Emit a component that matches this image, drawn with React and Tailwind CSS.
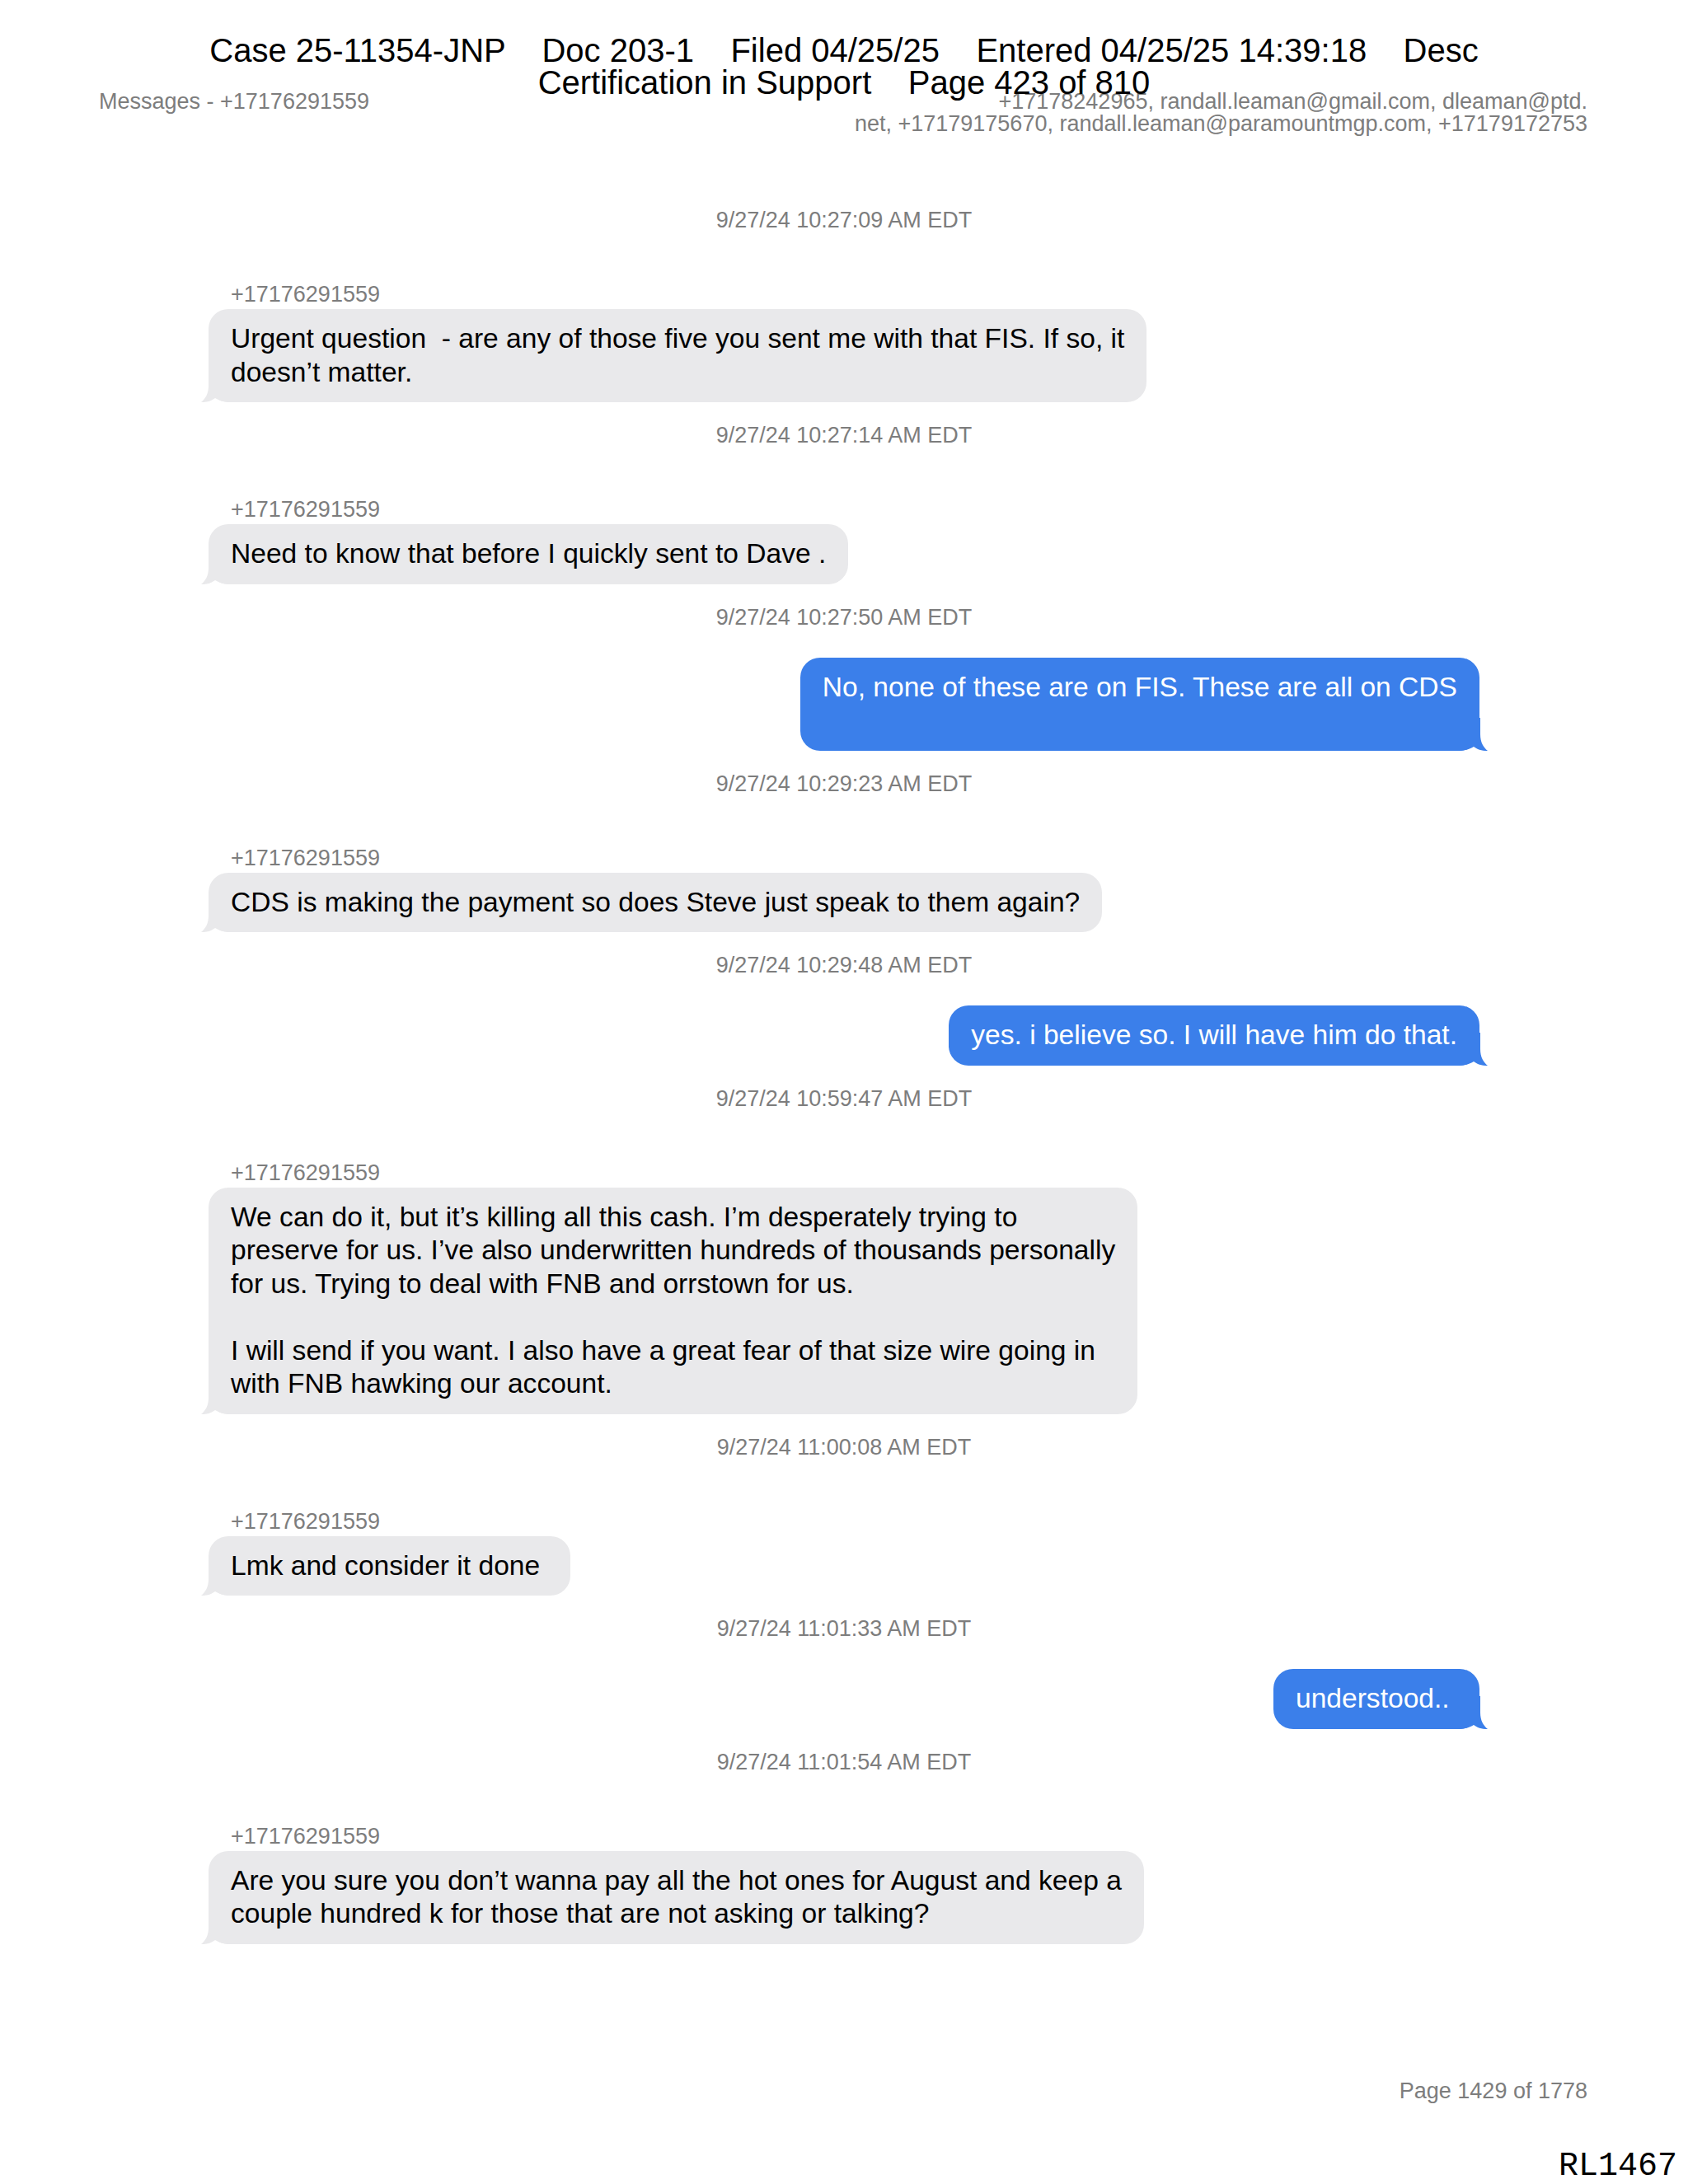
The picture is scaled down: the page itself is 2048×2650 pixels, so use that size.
const SENDER = "+17176291559";

const messages = [
  {
    time: "9/27/24 10:27:09 AM EDT",
    from: SENDER,
    lines: [
      "Urgent question  - are any of those five you sent me with that FIS. If so, it",
      "doesn’t matter.",
    ],
  },
  {
    time: "9/27/24 10:27:14 AM EDT",
    from: SENDER,
    lines: ["Need to know that before I quickly sent to Dave ."],
  },
  {
    time: "9/27/24 10:27:50 AM EDT",
    sent: true,
    lines: ["No, none of these are on FIS. These are all on CDS", " "],
  },
  {
    time: "9/27/24 10:29:23 AM EDT",
    from: SENDER,
    lines: ["CDS is making the payment so does Steve just speak to them again?"],
  },
  {
    time: "9/27/24 10:29:48 AM EDT",
    sent: true,
    lines: ["yes. i believe so. I will have him do that."],
  },
  {
    time: "9/27/24 10:59:47 AM EDT",
    from: SENDER,
    lines: [
      "We can do it, but it’s killing all this cash. I’m desperately trying to",
      "preserve for us. I’ve also underwritten hundreds of thousands personally",
      "for us. Trying to deal with FNB and orrstown for us.",
      " ",
      "I will send if you want. I also have a great fear of that size wire going in",
      "with FNB hawking our account.",
    ],
  },
  {
    time: "9/27/24 11:00:08 AM EDT",
    from: SENDER,
    lines: ["Lmk and consider it done "],
  },
  {
    time: "9/27/24 11:01:33 AM EDT",
    sent: true,
    lines: ["understood.. "],
  },
  {
    time: "9/27/24 11:01:54 AM EDT",
    from: SENDER,
    lines: [
      "Are you sure you don’t wanna pay all the hot ones for August and keep a",
      "couple hundred k for those that are not asking or talking?",
    ],
  },
];

function Tail({ sent }) {
  // little hook at the bottom corner of the bubble
  return (
    <svg
      viewBox="0 0 40 40"
      className={
        sent
          ? "absolute -right-[10px] bottom-0 w-[40px] h-[40px] -scale-x-100 fill-[#3b7fea]"
          : "absolute -left-[9px] bottom-0 w-[40px] h-[40px] fill-[#e9e9eb]"
      }
    >
      <path d="M9 0 L9 20 C9 30 5 36 0 40 C8 40 13 38 17 35 C22 38 28 40 40 40 L40 0 Z" />
    </svg>
  );
}

function Bubble({ msg }) {
  return (
    <div
      className={
        "relative rounded-[24px] px-[27px] py-[16px] text-[33.6px] leading-[40.5px] whitespace-pre " +
        (msg.sent
          ? "self-end bg-[#3b7fea] text-white mt-[33px]"
          : "self-start bg-[#e9e9eb] text-black mt-[2px]")
      }
    >
      <Tail sent={msg.sent} />
      <div className="relative">
        {msg.lines.map((line, i) => (
          <div key={i}>{line}</div>
        ))}
      </div>
    </div>
  );
}

export default function App() {
  return (
    <div className="relative w-[2048px] h-[2650px] bg-white font-['Liberation_Sans',Arial,sans-serif] overflow-hidden">
      {/* Court filing stamp */}
      <div className="absolute top-[42px] inset-x-0 text-center text-[40px] leading-[39px] text-black whitespace-pre z-10">
        <div>Case 25-11354-JNP    Doc 203-1    Filed 04/25/25    Entered 04/25/25 14:39:18    Desc</div>
        <div>Certification in Support    Page 423 of 810</div>
      </div>

      <div className="px-[120px] pt-[110px] pr-[122px]">
        {/* Header */}
        <div className="flex justify-between items-start text-[27px] leading-[27px] text-[#7d7d7d]">
          <div>Messages - +17176291559</div>
          <div className="text-right">
            <div>+17178242965, randall.leaman@gmail.com, dleaman@ptd.</div>
            <div>net, +17179175670, randall.leaman@paramountmgp.com, +17179172753</div>
          </div>
        </div>

        {/* Conversation */}
        <div className="mt-[87px] pl-[133px] pr-[131px] flex flex-col">
          {messages.map((msg, i) => (
            <div key={i} className={"flex flex-col " + (i === 0 ? "" : "mt-[24px]")}>
              <div className="text-center text-[27px] leading-[32px] text-[#7d7d7d]">
                {msg.time}
              </div>
              {!msg.sent && (
                <div className="mt-[58px] pl-[27px] text-[27px] leading-[32px] text-[#7d7d7d]">
                  {msg.from}
                </div>
              )}
              <Bubble msg={msg} />
            </div>
          ))}
        </div>

        {/* Footer */}
        <div className="mt-[165px] text-right text-[27px] leading-[27px] text-[#7d7d7d]">
          Page 1429 of 1778
        </div>
      </div>
      <div className="mt-[60px] pr-[13px] text-right font-['Liberation_Mono','Courier_New',monospace] text-[40px] leading-[36px] text-black">
        RL1467
      </div>
    </div>
  );
}
